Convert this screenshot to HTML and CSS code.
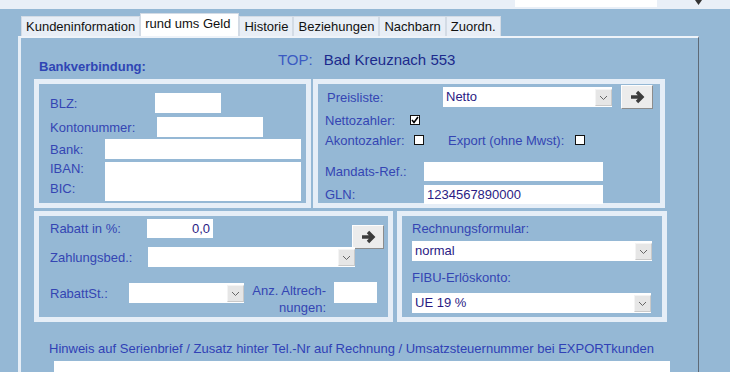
FILE: index.html
```html
<!DOCTYPE html>
<html>
  <head>
    <meta charset="UTF-8" />
    <title>Kunde - rund ums Geld</title>
    <link rel="stylesheet" href="styles.css">
  </head>
  <body>
    <div class="topbar">
      <div class="topbar-field"></div>
      <svg class="topbar-caret" width="7" height="5" viewBox="0 0 7 5"><path d="M0 0h7L3.5 5z" fill="#333"/></svg>
    </div>

    <div class="tabs">
      <div class="tab">Kundeninformation</div>
      <div class="tab active">rund ums Geld</div>
      <div class="tab">Historie</div>
      <div class="tab">Beziehungen</div>
      <div class="tab">Nachbarn</div>
      <div class="tab">Zuordn.</div>
    </div>

    <div class="panel">
      <div class="head">
        <div class="section-title">Bankverbindung:</div>
        <div class="top-label">TOP:</div>
        <div class="top-value">Bad Kreuznach 553</div>
      </div>

      <div class="group-row">
        <!-- Bankdaten -->
        <div class="box box-bank">
          <div class="frow row-blz">
            <span class="lbl lbl-blz">BLZ:</span>
            <div class="field w-66"></div>
          </div>
          <div class="frow row-konto">
            <span class="lbl lbl-konto">Kontonummer:</span>
            <div class="field w-106"></div>
          </div>
          <div class="frow row-bank">
            <span class="lbl lbl-bank">Bank:</span>
            <div class="field w-196"></div>
          </div>
          <div class="frow row-iban">
            <span class="lbl lbl-bank lbl-stack">IBAN:<br>BIC:</span>
            <div class="field w-196 tall"></div>
          </div>
        </div>

        <!-- Preisliste -->
        <div class="box box-price">
          <div class="frow row-preis">
            <span class="lbl lbl-preis">Preisliste:</span>
            <div class="select w-169">
              <span class="val">Netto</span>
              <span class="drop"><svg width="7" height="4" viewBox="0 0 7 4"><polyline points="0,0 3.5,3.5 7,0" fill="none" stroke="#666" stroke-width="1"/></svg></span>
            </div>
            <button class="go go-preis"><svg width="15" height="14" viewBox="0 0 15 14"><path d="M1 7H12M7 2l5 5-5 5" fill="none" stroke="#3c3c3c" stroke-width="3.4"/></svg></button>
          </div>
          <div class="frow row-netto">
            <span class="lbl lbl-netto">Nettozahler:</span>
            <span class="check checked"><svg width="8" height="8" viewBox="0 0 8 8"><polyline points="1,4 3,6.5 7,1" fill="none" stroke="#000" stroke-width="1.6"/></svg></span>
          </div>
          <div class="frow row-akonto">
            <span class="lbl lbl-akonto">Akontozahler:</span>
            <span class="check"></span>
            <span class="lbl lbl-export">Export (ohne Mwst):</span>
            <span class="check"></span>
          </div>
          <div class="frow row-mandat">
            <span class="lbl lbl-mandat">Mandats-Ref.:</span>
            <div class="field w-179 short"></div>
          </div>
          <div class="frow row-gln">
            <span class="lbl lbl-mandat">GLN:</span>
            <div class="field w-179 short"><span class="val">1234567890000</span></div>
          </div>
        </div>
      </div>

      <div class="group-row second">
        <!-- Rabatt / Zahlung -->
        <div class="box box-rabatt">
          <div class="frow row-rabatt">
            <span class="lbl lbl-rabatt">Rabatt in %:</span>
            <div class="field w-66 short num"><span class="val">0,0</span></div>
            <button class="go go-rabatt"><svg width="15" height="14" viewBox="0 0 15 14"><path d="M1 7H12M7 2l5 5-5 5" fill="none" stroke="#3c3c3c" stroke-width="3.4"/></svg></button>
          </div>
          <div class="frow row-zahlung">
            <span class="lbl lbl-zahlung">Zahlungsbed.:</span>
            <div class="select w-207">
              <span class="val"></span>
              <span class="drop"><svg width="7" height="4" viewBox="0 0 7 4"><polyline points="0,0 3.5,3.5 7,0" fill="none" stroke="#666" stroke-width="1"/></svg></span>
            </div>
          </div>
          <div class="frow row-rabattst">
            <span class="lbl lbl-rabattst">RabattSt.:</span>
            <div class="select w-115">
              <span class="val"></span>
              <span class="drop"><svg width="7" height="4" viewBox="0 0 7 4"><polyline points="0,0 3.5,3.5 7,0" fill="none" stroke="#666" stroke-width="1"/></svg></span>
            </div>
            <span class="lbl lbl-anz">Anz. Altrech-<br>nungen:</span>
            <div class="field w-43 anz"></div>
          </div>
        </div>

        <!-- Rechnung -->
        <div class="box box-rech">
          <div class="lbl rech-lbl">Rechnungsformular:</div>
          <div class="select w-240 rech-select">
            <span class="val">normal</span>
            <span class="drop"><svg width="7" height="4" viewBox="0 0 7 4"><polyline points="0,0 3.5,3.5 7,0" fill="none" stroke="#666" stroke-width="1"/></svg></span>
          </div>
          <div class="lbl rech-lbl second">FIBU-Erlöskonto:</div>
          <div class="select w-239 rech-select last">
            <span class="val">UE 19 %</span>
            <span class="drop"><svg width="7" height="4" viewBox="0 0 7 4"><polyline points="0,0 3.5,3.5 7,0" fill="none" stroke="#666" stroke-width="1"/></svg></span>
          </div>
        </div>
      </div>

      <div class="hint">Hinweis auf Serienbrief / Zusatz hinter Tel.-Nr auf Rechnung / Umsatzsteuernummer bei EXPORTkunden</div>
      <div class="field hint-field"></div>
    </div>
  </body>
</html>
```

FILE: styles.css
```css
* {
  box-sizing: border-box;
}
body {
  font-family: "Liberation Sans", Arial, sans-serif;
  font-size: 13px;
  margin: 0;
  width: 730px;
  height: 372px;
  overflow: hidden;
  background: #95b8d5;
  color: #3445b3;
}

/* top strip */
.topbar {
  display: flex;
  height: 9px;
  background: #e9eff7;
}
.topbar-field {
  margin-left: 515px;
  width: 142px;
  height: 7px;
  background: #fff;
}
.topbar-caret {
  margin: 0 0 0 38px;
}

/* tabs */
.tabs {
  display: flex;
  align-items: flex-end;
  height: 23px;
  margin: 4px 0 0 21px;
}
.tab {
  height: 20px;
  padding: 0 4px;
  background: #e8eef6;
  border: 1px solid #d3dbe5;
  border-bottom: none;
  color: #111;
  font-size: 13px;
  line-height: 19px;
}
.tab.active {
  height: 23px;
  padding: 0 8px 0 4px;
  background: #fff;
  line-height: 20px;
}

/* panel */
.panel {
  width: 681px;
  height: 336px;
  margin-left: 18px;
  border-left: 3px solid #e6eef7;
  border-top: 2px solid #eef3f9;
  border-right: 1px solid #5e6a77;
}
.head {
  display: flex;
  height: 41px;
}
.section-title {
  margin: 21px 0 0 18px;
  font-size: 13px;
  font-weight: bold;
  line-height: 15px;
  color: #2f45b4;
}
.top-label {
  margin: 13px 0 0 132px;
  font-size: 15px;
  line-height: 17px;
  color: #3b5ac2;
}
.top-value {
  margin: 13px 0 0 11px;
  font-size: 15px;
  line-height: 17px;
  color: #1c2a8c;
}

/* group boxes */
.group-row {
  display: flex;
  gap: 2px;
  margin-left: 13px;
}
.group-row.second {
  gap: 4px;
  margin-top: 3px;
}
.box {
  border: 5px solid #e6eef7;
  background: #95b8d5;
}
.box-bank {
  width: 277px;
  height: 129px;
  padding-left: 11px;
}
.box-price {
  width: 352px;
  height: 129px;
  padding-left: 7px;
}
.box-rabatt {
  width: 359px;
  height: 111px;
  padding-left: 11px;
}
.box-rech {
  width: 270px;
  height: 111px;
  padding-left: 10px;
}

.frow {
  display: flex;
  align-items: center;
}
.lbl {
  flex: none;
  line-height: 15px;
  white-space: nowrap;
}
.field {
  flex: none;
  height: 20px;
  background: #fff;
}
.field.short {
  height: 19px;
}
.field.tall {
  height: 39px;
}
.val {
  color: #2a1b84;
  font-size: 13px;
  line-height: 19px;
  padding-left: 3px;
}

.w-43 { width: 43px; }
.w-66 { width: 66px; }
.w-106 { width: 106px; }
.w-115 { width: 115px; }
.w-169 { width: 169px; }
.w-179 { width: 179px; }
.w-196 { width: 196px; }
.w-207 { width: 207px; }
.w-239 { width: 239px; }
.w-240 { width: 240px; }

/* bank box */
.row-blz { height: 20px; margin-top: 9px; }
.row-konto { height: 20px; margin-top: 4px; }
.row-bank { height: 20px; margin-top: 2px; }
.row-iban { height: 39px; margin-top: 3px; align-items: flex-start; }
.lbl-blz { width: 105px; }
.lbl-konto { width: 107px; }
.lbl-bank { width: 55px; }
.lbl-stack {
  line-height: 20px;
  margin-top: -3px;
}

/* price box */
.row-preis { height: 24px; margin-top: 1px; }
.row-netto { height: 18px; margin-top: 2px; }
.row-akonto { height: 18px; margin-top: 2px; }
.row-mandat { height: 19px; margin-top: 13px; }
.row-gln { height: 19px; margin-top: 4px; }
.lbl-preis { width: 118px; padding-left: 2px; }
.lbl-netto { width: 85px; }
.lbl-akonto { width: 89px; }
.lbl-export { width: 127px; margin-left: 24px; }
.lbl-mandat { width: 99px; }

.select {
  display: flex;
  flex: none;
  height: 20px;
  background: #fff;
}
.select .val {
  flex: 1;
  line-height: 20px;
}
.drop {
  display: flex;
  align-items: center;
  justify-content: center;
  width: 17px;
  height: 17px;
  margin-top: 2px;
  background: #e6e6e6;
  border: 1px solid #c9c9c9;
  border-top-color: #f4f4f4;
  border-left-color: #f4f4f4;
}

.check {
  display: flex;
  align-items: center;
  justify-content: center;
  flex: none;
  width: 10px;
  height: 10px;
  background: #fff;
  border: 1px solid #111;
}

.go {
  display: flex;
  align-items: center;
  justify-content: center;
  flex: none;
  width: 32px;
  height: 24px;
  padding: 0;
  background: #ececec;
  border: 1px solid;
  border-color: #fdfdfd #8c8c8c #8c8c8c #fdfdfd;
}
.go-preis {
  margin-left: 9px;
}

/* rabatt box */
.row-rabatt {
  height: 31px;
  align-items: flex-start;
}
.row-rabatt .lbl { margin-top: 5px; }
.row-rabatt .field { margin-top: 3px; }
.row-rabatt .val {
  display: block;
  text-align: right;
  padding-right: 3px;
}
.go-rabatt {
  margin: 9px 0 0 139px;
}
.lbl-rabatt { width: 97px; }
.row-zahlung { height: 20px; }
.lbl-zahlung { width: 98px; }
.row-rabattst {
  height: 21px;
  margin-top: 15px;
  align-items: flex-start;
}
.lbl-rabattst { width: 79px; margin-top: 4px; }
.row-rabattst .select { margin-top: 1px; }
.lbl-anz {
  width: 74px;
  margin-left: 8px;
  line-height: 17px;
  text-align: right;
}
.field.anz {
  height: 21px;
  margin-left: 8px;
}

/* rechnung box */
.rech-lbl {
  margin-top: 5px;
}
.rech-lbl.second {
  margin-top: 9px;
}
.rech-select {
  margin-top: 5px;
}
.rech-select.last {
  margin-top: 8px;
}

/* hint */
.hint {
  margin: 20px 0 0 28px;
  line-height: 14px;
  color: #3041b6;
}
.hint-field {
  width: 616px;
  height: 20px;
  margin: 5px 0 0 33px;
}
```
